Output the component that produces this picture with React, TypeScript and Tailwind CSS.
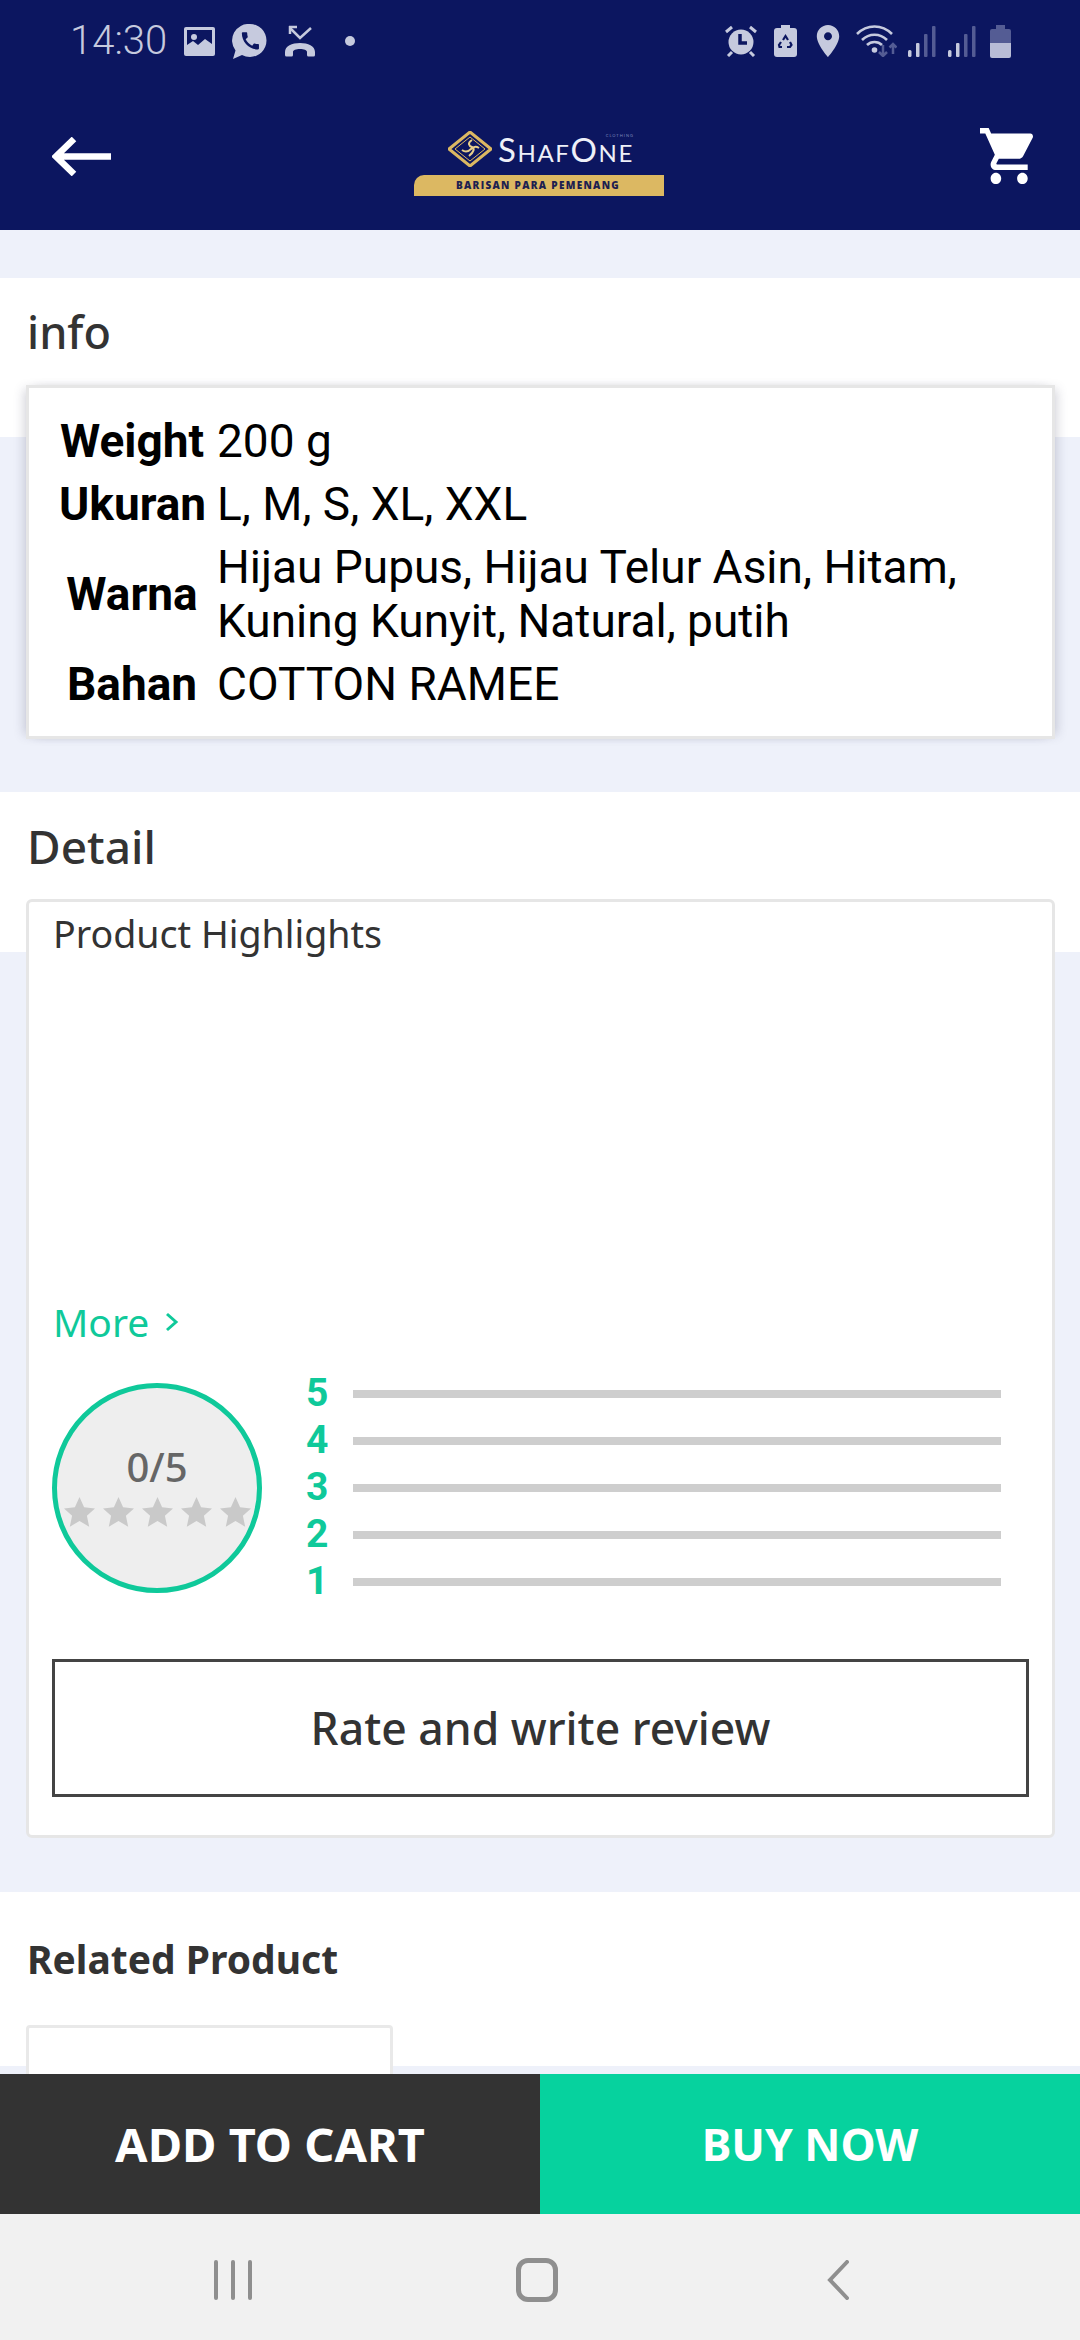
import React from "react";

const NOTO = "font-['Noto_Sans',sans-serif]";
const ROBOTO = "font-['Roboto',sans-serif]";

const specs = [
  { label: "Weight", value: "200 g" },
  { label: "Ukuran", value: "L, M, S, XL, XXL" },
  { label: "Warna", value: "Hijau Pupus, Hijau Telur Asin, Hitam, Kuning Kunyit, Natural, putih" },
  { label: "Bahan", value: "COTTON RAMEE" },
];

const LIGHT = "#c6cade";
const NAVY = "#0c1660";
const DIM = "#545c94";

function ImageIcon() {
  return (
    <svg width="31" height="29" viewBox="0 0 31 29">
      <rect width="31" height="29" rx="2" fill={LIGHT} />
      <rect x="3" y="3" width="25" height="23" fill={NAVY} />
      <circle cx="10" cy="10" r="3" fill={LIGHT} />
      <path d="M3 26v-8l6-4 5 4 7-6 7 5v9z" fill={LIGHT} />
    </svg>
  );
}

function WhatsappIcon() {
  return (
    <svg width="35" height="35" viewBox="0 0 35 35">
      <path d="M18 0a16.5 16.5 0 0 1 0 33c-3 0-5.500-.7-8-2l-9 4 2.500-8.500A16.500 16.500 0 0 1 18 0z" fill={LIGHT} />
      <path
        transform="translate(7 5.500) scale(.95)"
        d="M20.010 15.380c-1.230 0-2.420-.2-3.530-.56-.35-.12-.74-.03-1.010.24l-1.570 1.970c-2.830-1.350-5.480-3.900-6.890-6.830l1.950-1.660c.27-.28.35-.67.24-1.020-.37-1.110-.56-2.300-.56-3.530 0-.54-.45-.99-.99-.99H4.190C3.650 3 3 3.240 3 3.990 3 13.280 10.730 21 20.010 21c.71 0 .99-.63.99-1.180v-3.450c0-.54-.45-.99-.99-.99z"
        fill={NAVY}
      />
    </svg>
  );
}

function MissedCallIcon() {
  return (
    <svg width="32" height="32" viewBox="0 0 32 32" fill="none">
      <path d="M6 3l10 10L27 3" stroke={LIGHT} strokeWidth="2.500" />
      <path d="M5 2h8M6 1v8" stroke={LIGHT} strokeWidth="2.500" />
      <path d="M1 27c0-6 7-9 15-9s15 3 15 9v3a1.500 1.500 0 0 1-1.500 1.500h-5A1.500 1.500 0 0 1 23 30v-3c0-2-3-3-7-3s-7 1-7 3v3a1.500 1.500 0 0 1-1.500 1.500h-5A1.500 1.500 0 0 1 1 30z" fill={LIGHT} />
    </svg>
  );
}

function AlarmIcon() {
  return (
    <svg width="32" height="32" viewBox="0 0 32 32" fill="none">
      <circle cx="16" cy="17" r="12.500" fill={LIGHT} />
      <path d="M1 7l6-5M31 7l-6-5M3 31l4-4M29 31l-4-4" stroke={LIGHT} strokeWidth="3" />
      <path d="M15 9v9h7" stroke={NAVY} strokeWidth="3.500" />
    </svg>
  );
}

function SaverIcon() {
  return (
    <svg width="23" height="32" viewBox="0 0 23 32" fill="none">
      <rect x="7" width="9" height="4" fill={LIGHT} />
      <rect y="3" width="23" height="29" rx="3" fill={LIGHT} />
      <path d="M9 15l2.500-4 2.500 4M16 17l1.500 3-1.500 2h-3M8 22H5.500l-.5-2 2-3" stroke={NAVY} strokeWidth="2.200" />
    </svg>
  );
}

function PinIcon() {
  return (
    <svg width="26" height="32" viewBox="5 2 14 20">
      <path
        d="M12 2C8.130 2 5 5.130 5 9c0 5.250 7 13 7 13s7-7.750 7-13c0-3.870-3.130-7-7-7zm0 9.500c-1.380 0-2.500-1.120-2.500-2.500s1.120-2.500 2.500-2.500 2.500 1.120 2.500 2.500-1.120 2.500-2.500 2.500z"
        fill={LIGHT}
      />
    </svg>
  );
}

function WifiIcon() {
  return (
    <svg width="41" height="32" viewBox="0 0 41 32" fill="none">
      <path d="M1 9c10-10 25-10 35 0M6 15c7-7 18-7 25 0M11 20c4-4 11-4 15 0" stroke={LIGHT} strokeWidth="2.600" />
      <circle cx="18.500" cy="25" r="2.800" fill={LIGHT} />
      <path d="M27 20v11M23 27l4 4 4-4" stroke={DIM} strokeWidth="2.500" />
      <path d="M37 29V19M33.500 22.500l3.500-3.500 3.500 3.500" stroke={DIM} strokeWidth="2.500" />
    </svg>
  );
}

function SignalIcon() {
  return (
    <svg width="28" height="31" viewBox="0 0 28 31">
      <rect y="24" width="3.500" height="7" rx="1.500" fill={LIGHT} />
      <rect x="8" y="17" width="3.500" height="14" rx="1" fill={LIGHT} />
      <rect x="16" y="8" width="3.500" height="23" rx="1" fill={DIM} />
      <rect x="24" width="3.500" height="31" rx="1" fill={DIM} />
    </svg>
  );
}

function BatteryIcon() {
  return (
    <svg width="21" height="33" viewBox="0 0 21 33">
      <rect x="6" width="9" height="4" fill={DIM} />
      <path d="M2 4h17a2 2 0 0 1 2 2v12H0V6a2 2 0 0 1 2-2z" fill={DIM} />
      <path d="M0 18h21v13a2 2 0 0 1-2 2H2a2 2 0 0 1-2-2z" fill="#b9bdd6" />
    </svg>
  );
}

function ShafLogo() {
  return (
    <div className="flex h-[81px] w-[250px] flex-col">
      <div className="flex h-[60px] items-center pl-[34px] pt-[8px]">
        <svg width="44" height="36" viewBox="0 0 44 36" fill="none">
          <path d="M22 1l21 17-21 17L1 18z" stroke="#dcb862" strokeWidth="3" strokeLinejoin="round" />
          <path d="M22 6l15 12-15 12L7 18z" stroke="#dcb862" strokeWidth="1" />
          <path d="M24 9c-5 3-3 6 0 7s2 5-3 9M14 19c4 3 7 1 9-1s5-3 8-1" stroke="#e8cf8a" strokeWidth="2" />
        </svg>
        <span className="relative ml-[6px] font-['Lato',sans-serif] text-[33px] leading-none tracking-[1.600px] text-[#eef0f8]">
          S<span className="text-[24px]">HAF</span>O<span className="text-[24px]">NE</span>
          <span className="absolute right-0 top-[1px] text-[4px] leading-none tracking-[1px] text-[#7c88bc]">CLOTHING</span>
        </span>
      </div>
      <div className="flex h-[21px] items-center justify-center rounded-tl-[10px] bg-[#dcb862] pr-[2px] font-['Open_Sans',sans-serif] text-[10px] font-extrabold tracking-[1.300px] text-[#1c2050]">
        BARISAN PARA PEMENANG
      </div>
    </div>
  );
}

function Star() {
  return (
    <svg width="31" height="30" viewBox="0 0 31 30">
      <path d="M15.500 0l4.600 10.200 11 1.200-8.200 7.300 2.300 11-9.700-5.600-9.700 5.600 2.300-11L-.1 11.400l11-1.200z" fill="#c9c9c9" />
    </svg>
  );
}

export default function App() {
  return (
    <div className={`relative h-[2340px] w-[1080px] overflow-hidden bg-[#eef1fa] ${NOTO}`}>
      <header className="h-[230px] bg-[#0c1660]">
        <div className="flex h-[82px] items-center justify-between pl-[70px] pr-[69px]">
          <div className="flex items-center">
            <span className={`${ROBOTO} text-[40px] font-light leading-none text-[#c6cade]`}>14:30</span>
            <span className="ml-[17px] flex"><ImageIcon /></span>
            <span className="ml-[17px] flex"><WhatsappIcon /></span>
            <span className="ml-[17px] flex"><MissedCallIcon /></span>
            <span className="ml-[29px] h-[10px] w-[10px] rounded-full bg-[#c6cade]" />
          </div>
          <div className="flex items-center">
            <AlarmIcon />
            <span className="ml-[17px] flex"><SaverIcon /></span>
            <span className="ml-[18px] flex"><PinIcon /></span>
            <span className="ml-[15px] flex"><WifiIcon /></span>
            <span className="ml-[11px] flex"><SignalIcon /></span>
            <span className="ml-[12px] flex"><SignalIcon /></span>
            <span className="ml-[14px] flex"><BatteryIcon /></span>
          </div>
        </div>
        <div className="flex h-[148px] items-center pl-[52px]">
          <svg width="59" height="39" viewBox="0 0 59 39" fill="none">
            <path d="M59 19.500H4M22 2L4 19.500 22 37" stroke="#fff" strokeWidth="6.500" />
          </svg>
          <div className="ml-[303px] -mt-[1px]"><ShafLogo /></div>
          <svg className="ml-[316px]" width="53" height="56" viewBox="1 2 20 20" preserveAspectRatio="none">
            <path
              d="M7 18c-1.100 0-1.990.9-1.990 2S5.900 22 7 22s2-.9 2-2-.9-2-2-2zM1 2v2h2l3.600 7.590-1.350 2.450c-.16.28-.25.61-.25.96 0 1.100.9 2 2 2h12v-2H7.420c-.14 0-.25-.11-.25-.25l.03-.12.9-1.630h7.450c.75 0 1.410-.41 1.750-1.030l3.580-6.490c.08-.14.12-.31.12-.48 0-.55-.45-1-1-1H5.210l-.94-2H1zm16 16c-1.100 0-1.990.9-1.990 2s.89 2 1.990 2 2-.9 2-2-.9-2-2-2z"
              fill="#fff"
            />
          </svg>
        </div>
      </header>

      <section className="mt-[48px]">
        <div className="h-[159px] bg-white pl-[27px] pt-[29px]">
          <h2 className="text-[45px] font-medium leading-[50px] text-[#333]">info</h2>
        </div>
        <div className={`relative ml-[26px] mr-[25px] -mt-[52px] border-[3px] border-[#e6e6e6] bg-white pb-[21px] pl-[30px] pr-[20px] pt-[22px] text-[46px] leading-[54px] text-black shadow-[6px_0_10px_-4px_rgba(60,60,90,0.22),-6px_0_10px_-4px_rgba(60,60,90,0.22)] ${ROBOTO}`}>
          <div className="grid grid-cols-[146px_1fr] gap-x-[12px] gap-y-[9px] py-[4px]">
            {specs.map((row) => (
              <React.Fragment key={row.label}>
                <div className="self-center whitespace-nowrap text-center font-bold">{row.label}</div>
                <div>{row.value}</div>
              </React.Fragment>
            ))}
          </div>
        </div>
      </section>

      <section className="mt-[53px]">
        <div className="h-[160px] bg-white pl-[27px] pt-[29px]">
          <h2 className="text-[46px] font-medium leading-[50px] text-[#333]">Detail</h2>
        </div>
        <div className="relative ml-[26px] mr-[25px] -mt-[53px] rounded-[6px] border-[3px] border-[#e6e6e6] bg-white px-[23px] pb-[38px] pt-[7px]">
          <div className="pl-[1px] text-[37.600px] leading-[50px] text-[#333]">Product Highlights</div>
          <div className="h-[339px]" />
          <div className="flex items-center pl-[1px] text-[#0fc99a]">
            <span className="text-[39px] leading-[48px]">More</span>
            <svg className="ml-[16px]" width="14" height="20" viewBox="0 0 14 20" fill="none">
              <path d="M2 2l9 8-9 8" stroke="#0fc99a" strokeWidth="3" />
            </svg>
          </div>
          <div className="mt-[24px] flex items-start">
            <div className="mt-[13px] flex h-[210px] w-[210px] flex-col items-center justify-center rounded-full border-[5px] border-[#0fc99a] bg-[#eeeeee] pb-[5px]">
              <div className="text-[40px] font-medium leading-[46px] text-[#666]">0/5</div>
              <div className="mt-[7px] flex gap-[8px]">
                {[0, 1, 2, 3, 4].map((i) => (
                  <Star key={i} />
                ))}
              </div>
            </div>
            <div className="ml-[44px] flex flex-col">
              {[5, 4, 3, 2, 1].map((n) => (
                <div key={n} className="flex h-[47px] items-center">
                  <span className={`${ROBOTO} w-[20px] text-center text-[39px] font-bold leading-none text-[#0fc99a]`}>{n}</span>
                  <span className="ml-[27px] h-[8px] w-[648px] bg-[#cecece]" />
                </div>
              ))}
            </div>
          </div>
          <button className="mt-[54px] flex h-[138px] w-full items-center justify-center border-[3px] border-[#444] bg-white text-[44.500px] font-medium text-[#333]">
            Rate and write review
          </button>
        </div>
      </section>

      <section className="mt-[54px]">
        <div className="h-[174px] bg-white pl-[27px] pt-[42px]">
          <h3 className="text-[39px] font-bold leading-[50px] text-[#333]">Related Product</h3>
        </div>
        <div className="relative ml-[26px] -mt-[41px] h-[120px] w-[367px] rounded-[4px] border-[3px] border-[#e9e9e9] bg-white" />
      </section>

      <div className="absolute inset-x-0 bottom-0">
        <div className="flex h-[140px] font-bold text-white">
          <button className="flex flex-1 items-center justify-center bg-[#333] text-[47px]">ADD TO CART</button>
          <button className="flex flex-1 items-center justify-center bg-[#06d29e] text-[44.500px]">BUY NOW</button>
        </div>
        <nav className="relative flex h-[126px] items-center bg-[#f1f1f1] pl-[214px] pt-[6px]">
          <div className="flex gap-[13px]">
            <span className="h-[40px] w-[4px] rounded-full bg-[#8f8f8f]" />
            <span className="h-[40px] w-[4px] rounded-full bg-[#8f8f8f]" />
            <span className="h-[40px] w-[4px] rounded-full bg-[#8f8f8f]" />
          </div>
          <span className="ml-[264px] h-[44px] w-[42px] rounded-[12px] border-[5px] border-[#8f8f8f]" />
          <svg className="ml-[269px]" width="22" height="40" viewBox="0 0 22 40" fill="none">
            <path d="M20 2L3 20l17 18" stroke="#8f8f8f" strokeWidth="4" strokeLinecap="round" />
          </svg>
        </nav>
      </div>
    </div>
  );
}
